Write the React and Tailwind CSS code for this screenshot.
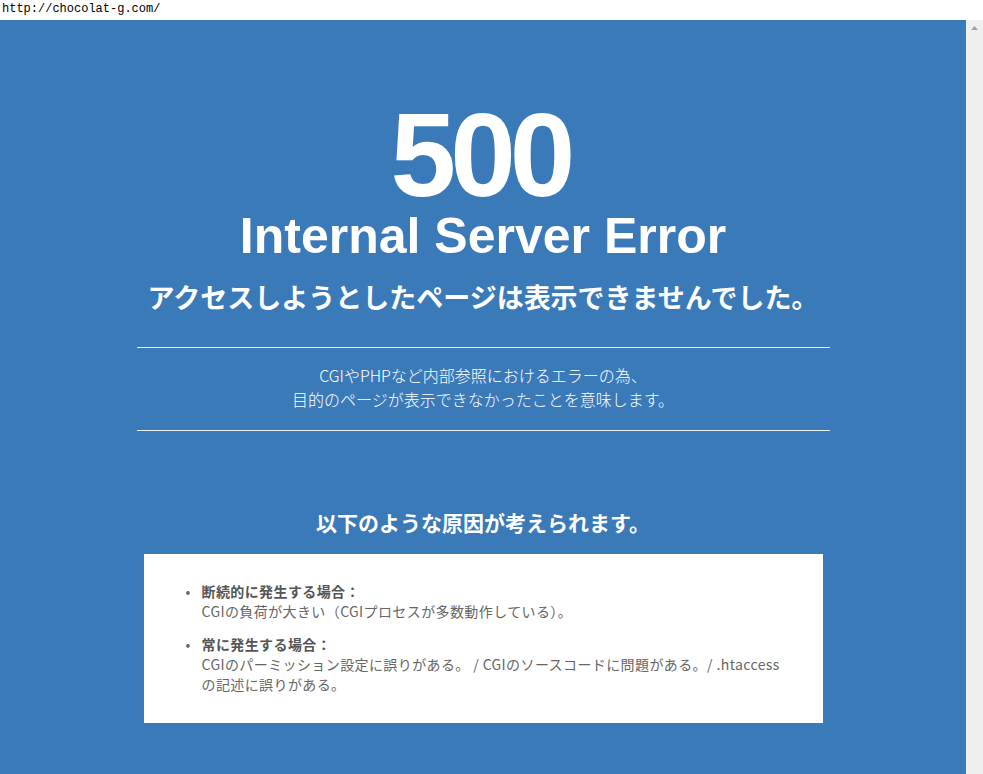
import React from 'react'

// 500 error page, as seen inside a browser window with url bar + scrollbar

const causes = [
   {
      title: '断続的に発生する場合：',
      lines: ['CGIの負荷が大きい（CGIプロセスが多数動作している）。'],
   },
   {
      title: '常に発生する場合：',
      lines: ['CGIのパーミッション設定に誤りがある。 / CGIのソースコードに問題がある。/ .htaccess', 'の記述に誤りがある。'],
   },
]

const App = () => {
   return (
      <div className="w-[983px] h-[774px] flex flex-col bg-white overflow-hidden" style={{ fontFamily: '"Liberation Sans", "Noto Sans CJK JP", sans-serif' }}>
         {/* url bar */}
         <div className="h-[20px] px-[2px] text-[12px] leading-[18px] text-black" style={{ fontFamily: '"Liberation Mono", "DejaVu Sans Mono", monospace' }}>
            http://chocolat-g.com/
         </div>

         <div className="flex flex-1 min-h-0">
            <main className="flex-1 bg-[#3b7ab8] text-white flex flex-col items-center pt-[76px]">
               <h1 className="text-[118px] font-bold leading-none tracking-[-6px] pr-[6px]">500</h1>
               <h2 className="text-[50px] font-bold leading-none mt-[-3px]">Internal Server Error</h2>
               <p className="text-[27px] font-bold leading-[38px] mt-[17px]" style={{ fontFamily: '"Noto Sans CJK JP", sans-serif' }}>
                  アクセスしようとしたページは表示できませんでした。
               </p>

               <div className="w-[693px] mt-[31px] border-t border-b border-white/90 pt-[15px] pb-[19px] text-center text-[16px] leading-[24px] font-light" style={{ fontFamily: '"Noto Sans CJK JP", sans-serif' }}>
                  <p>CGIやPHPなど内部参照におけるエラーの為、</p>
                  <p>目的のページが表示できなかったことを意味します。</p>
               </div>

               <h3 className="mt-[77px] text-[21px] font-bold leading-[28px]" style={{ fontFamily: '"Noto Sans CJK JP", sans-serif' }}>
                  以下のような原因が考えられます。
               </h3>

               <div className="w-[679px] h-[169px] mt-[18px] bg-white px-[42px] pt-[27px] text-[14px] leading-[20px] tracking-[0.4px] text-[#666]" style={{ fontFamily: '"Noto Sans CJK JP", sans-serif' }}>
                  <ul className="flex flex-col gap-[13px]">
                     {causes.map((c, i) => (
                        <li key={i} className="flex">
                           <span className="w-[16px] shrink-0 text-[#666]">•</span>
                           <div>
                              <p className="font-bold text-[#555]">{c.title}</p>
                              {c.lines.map((l, j) => <p key={j}>{l}</p>)}
                           </div>
                        </li>
                     ))}
                  </ul>
               </div>
            </main>

            {/* scrollbar */}
            <div className="w-[17px] bg-[#f0f0f0] flex justify-center pt-[6px]">
               <svg width="7" height="4" viewBox="0 0 7 4"><path d="M0 4 L3.5 0 L7 4 Z" fill="#a3a3a3" /></svg>
            </div>
         </div>
      </div>
   )
}

export default App
